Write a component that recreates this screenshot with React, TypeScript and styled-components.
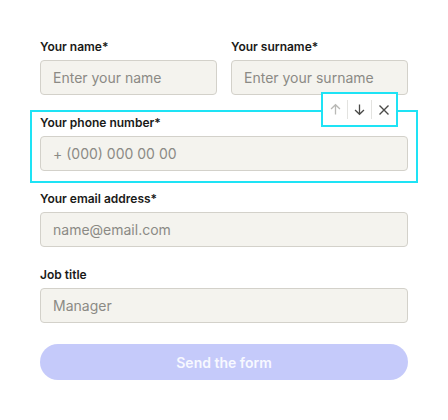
import React from "react";
import styled, { createGlobalStyle } from "styled-components";

const GlobalStyle = createGlobalStyle`
  html, body {
    margin: 0;
    padding: 0;
    background: #ffffff;
  }
  body {
    font-family: Inter, "Noto Sans", sans-serif;
    color: #1c1c1a;
  }
`;

const Form = styled.form`
  width: 388px;
  padding: 34px 0 0 30px;
  display: flex;
  flex-direction: column;
  gap: 3px;
`;

const FieldBox = styled.div<{ $selected?: boolean }>`
  position: relative;
  border: 2px solid ${(p) => (p.$selected ? "#1ee3f5" : "transparent")};
  padding: 3px 8px 10px;
`;

const Row = styled.div`
  display: grid;
  grid-template-columns: 1fr 1fr;
  gap: 14px;
`;

const Field = styled.label`
  display: flex;
  flex-direction: column;
`;

const Label = styled.span`
  font-size: 12px;
  line-height: 16px;
  font-weight: 600;
  margin-bottom: 5px;
  color: #1a1a18;
`;

const Input = styled.input`
  box-sizing: border-box;
  height: 35px;
  width: 100%;
  border: 1px solid #d3d1ca;
  border-radius: 4px;
  background: #f4f3ee;
  padding: 0 12px;
  font-family: Inter, "Noto Sans", sans-serif;
  font-size: 14px;
  color: #1c1c1a;
  outline: none;

  &::placeholder {
    color: #8b8a85;
  }
`;

const Toolbar = styled.div`
  position: absolute;
  top: -20px;
  right: 18px;
  box-sizing: border-box;
  height: 35px;
  display: flex;
  align-items: center;
  padding: 0 1px;
  background: #ffffff;
  border: 2px solid #1ee3f5;
`;

const ToolButton = styled.button<{ $disabled?: boolean }>`
  width: 23px;
  height: 23px;
  display: flex;
  align-items: center;
  justify-content: center;
  padding: 0;
  border: none;
  background: transparent;
  color: ${(p) => (p.$disabled ? "#b9b9b6" : "#4a4a48")};
  cursor: pointer;
`;

const Divider = styled.span`
  width: 1px;
  height: 19px;
  background: #e3e3e0;
`;

const SubmitButton = styled.button`
  margin: 6px 0 0 10px;
  width: 368px;
  height: 36px;
  border: none;
  border-radius: 18px;
  background: #c5cafa;
  color: #f7f8ff;
  font-family: Inter, "Noto Sans", sans-serif;
  font-size: 14px;
  font-weight: 600;
`;

const ArrowUp = () => (
  <svg width="13" height="13" viewBox="0 0 14 14" fill="none" stroke="currentColor" strokeWidth="1.4">
    <path d="M7 12.5V1.8M2.2 6.5L7 1.8l4.8 4.7" />
  </svg>
);

const ArrowDown = () => (
  <svg width="13" height="13" viewBox="0 0 14 14" fill="none" stroke="currentColor" strokeWidth="1.4">
    <path d="M7 1.5v10.7M2.2 7.5L7 12.2l4.8-4.7" />
  </svg>
);

const Close = () => (
  <svg width="12" height="12" viewBox="0 0 12 12" fill="none" stroke="currentColor" strokeWidth="1.4">
    <path d="M1.5 1.5l9 9M10.5 1.5l-9 9" />
  </svg>
);

const App: React.FC = () => {
  return (
    <>
      <GlobalStyle />
      <Form onSubmit={(e) => e.preventDefault()}>
        <FieldBox>
          <Row>
            <Field>
              <Label>Your name*</Label>
              <Input placeholder="Enter your name" />
            </Field>
            <Field>
              <Label>Your surname*</Label>
              <Input placeholder="Enter your surname" />
            </Field>
          </Row>
        </FieldBox>
        <FieldBox $selected>
          <Toolbar>
            <ToolButton type="button" $disabled>
              <ArrowUp />
            </ToolButton>
            <Divider />
            <ToolButton type="button">
              <ArrowDown />
            </ToolButton>
            <Divider />
            <ToolButton type="button">
              <Close />
            </ToolButton>
          </Toolbar>
          <Field>
            <Label>Your phone number*</Label>
            <Input placeholder="+ (000) 000 00 00" />
          </Field>
        </FieldBox>
        <FieldBox>
          <Field>
            <Label>Your email address*</Label>
            <Input placeholder="name@email.com" />
          </Field>
        </FieldBox>
        <FieldBox>
          <Field>
            <Label>Job title</Label>
            <Input placeholder="Manager" />
          </Field>
        </FieldBox>
        <SubmitButton type="submit">Send the form</SubmitButton>
      </Form>
    </>
  );
};

export default App;
